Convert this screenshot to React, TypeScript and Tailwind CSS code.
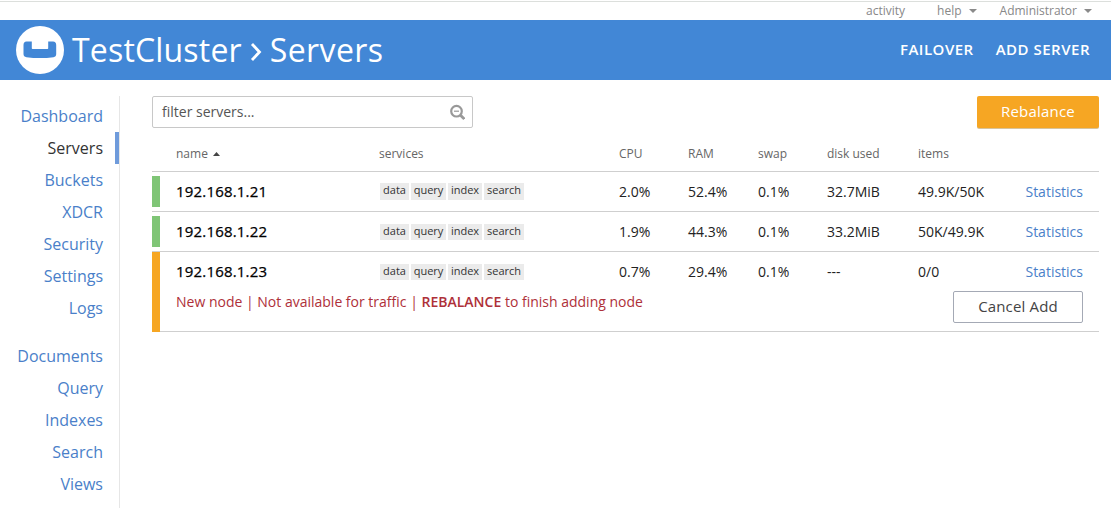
import React from "react";

const primaryNav = ["Dashboard", "Servers", "Buckets", "XDCR", "Security", "Settings", "Logs"];
const secondaryNav = ["Documents", "Query", "Indexes", "Search", "Views"];
const services = [
  { name: "data", width: "w-[29px]" },
  { name: "query", width: "w-[35px]" },
  { name: "index", width: "w-[34px]" },
  { name: "search", width: "w-[40px]" },
];

type Server = {
  ip: string;
  cpu: string;
  ram: string;
  swap: string;
  disk: string;
  items: string;
  pending?: boolean;
};

const servers: Server[] = [
  { ip: "192.168.1.21", cpu: "2.0%", ram: "52.4%", swap: "0.1%", disk: "32.7MiB", items: "49.9K/50K" },
  { ip: "192.168.1.22", cpu: "1.9%", ram: "44.3%", swap: "0.1%", disk: "33.2MiB", items: "50K/49.9K" },
  { ip: "192.168.1.23", cpu: "0.7%", ram: "29.4%", swap: "0.1%", disk: "---", items: "0/0", pending: true },
];

const columns = "grid grid-cols-[203px_240px_69px_70px_69px_91px_1fr_auto]";

function Caret() {
  return (
    <svg className="h-[4px] w-[8px]" viewBox="0 0 8 4" fill="#8a8a8a">
      <path d="M0 0h8L4 4z" />
    </svg>
  );
}

function NavItem({ label }: { label: string }) {
  const active = label === "Servers";
  return (
    <a
      className={
        active
          ? "block h-8 border-r-4 border-[#6f9bdb] pr-3 text-right text-[#333]"
          : "block h-8 pr-4 text-right text-[#4a7fc9]"
      }
    >
      {label}
    </a>
  );
}

function ServerRow({ server, first }: { server: Server; first: boolean }) {
  return (
    <div className={server.pending ? "flex h-20 border-b border-[#cfcfcf]" : "flex h-10 border-b border-[#cfcfcf] py-1"}>
      <div className={server.pending ? "-mb-px w-2 bg-[#f6a623]" : "w-2 bg-[#7fc576]"} />
      <div className={server.pending ? "flex-1 pl-4 pr-4 pt-1" : "flex-1 pl-4 pr-4"}>
        <div className={`${columns} h-8 text-[14px] leading-[32px] text-[#222]`}>
          <span className="text-[15px] font-medium leading-[30px] tracking-[0.18px] text-black [-webkit-text-stroke:0.25px_black]">
            {server.ip}
          </span>
          <span className={first ? "flex gap-[2px] pl-px pt-[7px]" : "flex gap-[2px] pl-px pt-2"}>
            {services.map((s) => (
              <span
                key={s.name}
                className={`${s.width} ${first ? "h-[17px]" : "h-4"} whitespace-nowrap bg-[#ebebeb] text-center text-[11px] leading-[14px] text-[#333]`}
              >
                {s.name}
              </span>
            ))}
          </span>
          <span>{server.cpu}</span>
          <span>{server.ram}</span>
          <span>{server.swap}</span>
          <span>{server.disk}</span>
          <span>{server.items}</span>
          <a className="text-[#4a7fc9]">Statistics</a>
        </div>
        {server.pending && (
          <div className="flex items-start justify-between pt-[3px]">
            <p className="text-[14px] leading-[22px] text-[#ae3039]">
              New node | Not available for traffic | <b className="font-semibold">REBALANCE</b> to finish adding node
            </p>
            <button className="h-8 w-[130px] rounded-[2px] border border-[#a4a9b5] pb-[2px] text-[15px] leading-[28px] tracking-[0.15px] text-[#444]">
              Cancel Add
            </button>
          </div>
        )}
      </div>
    </div>
  );
}

export default function App() {
  return (
    <div className="h-[508px] w-[1111px] overflow-hidden bg-white font-['Open_Sans','Noto_Sans',sans-serif] font-normal">
      <div className="flex h-5 justify-end border-t border-white pr-[19px] text-[12px] leading-[18px] text-[#888] shadow-[inset_0_1px_0_#dcdfdc]">
        <span className="mr-8 flex items-center">activity</span>
        <span className="mr-[23px] flex items-center gap-[7px]">help <Caret /></span>
        <span className="flex items-center gap-[7px]">Administrator <Caret /></span>
      </div>

      <header className="flex h-[60px] items-center bg-[#4287d6] pl-4 pr-[21px] text-white">
        <svg className="h-12 w-12" viewBox="0 0 48 48">
          <circle cx="24" cy="24" r="24" fill="#fff" />
          <path
            d="M10.500 15.500H15.800V22.300Q15.800 23 16.500 23H31.500Q32.200 23 32.200 22.300V15.500H37Q40.200 15.500 40.200 19V28Q40.200 30.700 37.500 31.200Q24 33 10.500 31.200Q7.500 30.700 7.500 28V19Q7.500 15.500 10.500 15.500Z"
            fill="#4287d6"
          />
        </svg>
        <h1 className="flex items-center pl-2 text-[32px] leading-[60px] tracking-[0.18px]">
          <span>TestCluster</span>
          <svg className="ml-[8px] mr-[8px] mt-1 h-5 w-3" viewBox="0 0 12 20" fill="none" stroke="white" strokeWidth="2.8">
            <path d="M2 2l7.500 8L2 18" />
          </svg>
          <span className="tracking-[0.4px]">Servers</span>
        </h1>
        <nav className="ml-auto flex gap-[22px] pb-[2px] text-[15px] font-semibold tracking-[0.5px]">
          <a>FAILOVER</a>
          <a>ADD SERVER</a>
        </nav>
      </header>

      <div className="flex h-[428px] pt-4">
        <aside className="w-[120px] border-r border-[#e6e6e6] pt-1 text-[16px] leading-8">
          <nav>{primaryNav.map((l) => <NavItem key={l} label={l} />)}</nav>
          <nav className="mt-4">{secondaryNav.map((l) => <NavItem key={l} label={l} />)}</nav>
        </aside>

        <main className="ml-8 w-[947px]">
          <div className="flex h-8 justify-between">
            <div className="flex w-[321px] items-center justify-between rounded-[2px] border border-[#c8c8c8] pl-[9px] pr-[7px] text-[14px] leading-[30px] text-[#555]">
              <span>filter servers...</span>
              <svg className="h-4 w-4" viewBox="0 0 16 16" fill="none" stroke="#999" strokeWidth="2.2">
                <circle cx="7.5" cy="7.2" r="5.3" />
                <path d="M11.500 11.200l3.800 3.800" strokeWidth="2.8" />
                <path d="M5 7.200h5" strokeWidth="1.2" />
              </svg>
            </div>
            <button className="w-[122px] rounded-[2px] bg-[#f6a623] pb-[2px] text-[15px] leading-[30px] tracking-[0.2px] text-white shadow-[0_1px_0_#d8c39a]">
              Rebalance
            </button>
          </div>
          <div className={`${columns} h-11 border-b border-[#cfcfcf] pl-6 pr-4 text-[12px] leading-[52px] text-[#666]`}>
            <span className="flex h-[52px] items-center gap-[5px]">
              name
              <svg className="h-1 w-[7px]" viewBox="0 0 7 4" fill="#444">
                <path d="M0 4h7L3.500 0z" />
              </svg>
            </span>
            <span>services</span>
            <span>CPU</span>
            <span>RAM</span>
            <span>swap</span>
            <span>disk used</span>
            <span>items</span>
          </div>
          {servers.map((s, i) => <ServerRow key={s.ip} server={s} first={i === 0} />)}
        </main>
      </div>
    </div>
  );
}
